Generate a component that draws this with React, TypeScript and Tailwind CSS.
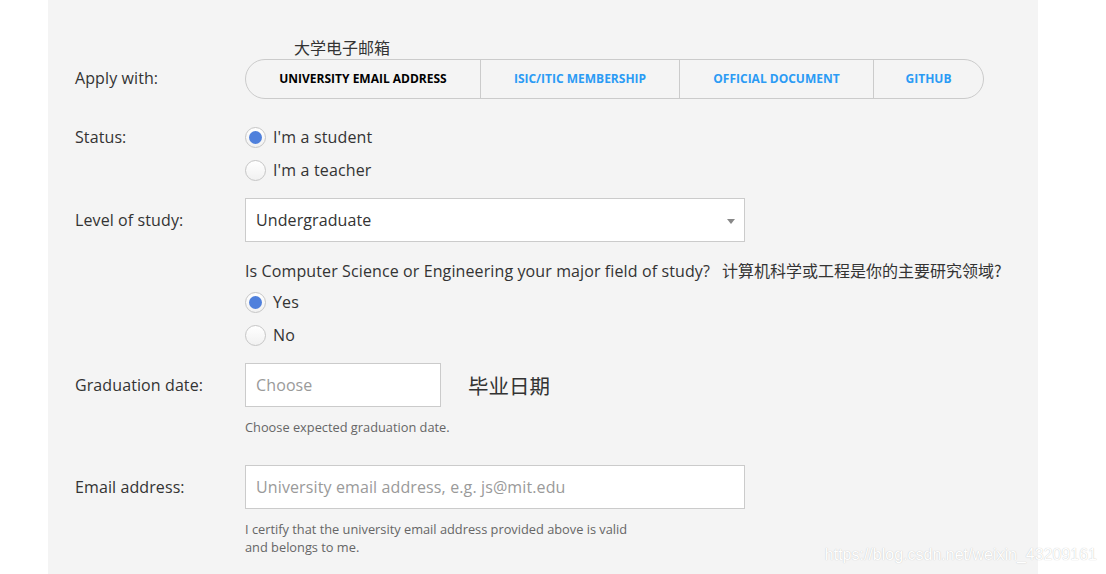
import React from "react";

const TABS = [
  { label: "University email address", w: "w-[234px]", active: true },
  { label: "ISIC/ITIC membership", w: "w-[199px]", active: false },
  { label: "Official document", w: "w-[194px]", active: false },
  { label: "GitHub", w: "flex-1", active: false },
];

function Radio({ checked, label }: { checked?: boolean; label: string }) {
  return (
    <label className="flex items-center h-[20px] gap-[7px] cursor-pointer">
      <span className="w-[21px] h-[21px] rounded-full border border-[#c6c6c6] bg-gradient-to-b from-white to-[#f1f1f1] flex items-center justify-center shrink-0">
        {checked && <span className="w-[13px] h-[13px] rounded-full bg-[#4f80dc]" />}
      </span>
      <span className="text-[16px] tracking-[0.15px] text-[#333]">{label}</span>
    </label>
  );
}

function Label({ children }: { children: React.ReactNode }) {
  return <div className="w-[170px] shrink-0 text-[16px] tracking-[0.1px] text-[#333]">{children}</div>;
}

export default function App() {
  return (
    <div className="relative min-h-[574px] bg-white font-['Open_Sans','Noto_Sans_CJK_SC',sans-serif]">
      <div className="ml-[48px] w-[990px] min-h-[574px] bg-[#f4f4f4] pl-[27px] pt-[36px]">
        {/* caption above tabs */}
        <div className="ml-[219px] h-[22px] leading-[22px] text-[16px] text-[#333] font-['Noto_Sans_CJK_SC',sans-serif]">
          大学电子邮箱
        </div>

        {/* Apply with */}
        <div className="flex items-center mt-[1px]">
          <Label>
            <div className="pb-[3px]">Apply with:</div>
          </Label>
          <div className="flex w-[739px] h-[40px] rounded-full border border-[#cbcbcb] overflow-hidden">
            {TABS.map((t, i) => (
              <button
                key={t.label}
                className={`${t.w} h-full flex items-center justify-center uppercase text-[12px] font-bold ${
                  i > 0 ? "border-l border-[#cbcbcb]" : ""
                } ${t.active ? "text-black" : "text-[#2b9bf4]"}`}
              >
                {t.label}
              </button>
            ))}
          </div>
        </div>

        {/* Status */}
        <div className="flex mt-[28px]">
          <Label>
            <div className="h-[20px] leading-[20px]">Status:</div>
          </Label>
          <div className="flex flex-col gap-[13px]">
            <Radio checked label="I'm a student" />
            <Radio label="I'm a teacher" />
          </div>
        </div>

        {/* Level of study */}
        <div className="flex items-center mt-[18px]">
          <Label>Level of study:</Label>
          <div className="w-[500px] h-[44px] bg-white border border-[#cbcbcb] flex items-center justify-between pl-[10px] pr-[9px]">
            <span className="text-[16px] tracking-[0.1px] text-[#333]">Undergraduate</span>
            <svg width="8" height="5" viewBox="0 0 8 5" className="mt-[2px]">
              <path d="M0 0h8L4 5z" fill="#888" />
            </svg>
          </div>
        </div>

        {/* Major question */}
        <div className="ml-[170px] mt-[17px] h-[22px] leading-[22px] text-[16px] text-[#333] whitespace-nowrap">
          <span className="tracking-[0.11px]">Is Computer Science or Engineering your major field of study?</span>
          <span className="ml-[12px] text-[16px] font-['Noto_Sans_CJK_SC',sans-serif]">计算机科学或工程是你的主要研究领域?</span>
        </div>
        <div className="ml-[170px] mt-[11px] flex flex-col gap-[13px]">
          <Radio checked label="Yes" />
          <Radio label="No" />
        </div>

        {/* Graduation date */}
        <div className="flex items-center mt-[18px]">
          <Label>Graduation date:</Label>
          <input
            placeholder="Choose"
            className="w-[196px] h-[44px] bg-white border border-[#cbcbcb] px-[10px] text-[16px] tracking-[0.12px] text-[#333] placeholder:text-[#9a9a9a] outline-none"
          />
          <span className="ml-[27px] text-[20.5px] text-[#333] font-['Noto_Sans_CJK_SC',sans-serif]">毕业日期</span>
        </div>
        <div className="ml-[170px] mt-[11px] text-[12.8px] leading-[18px] text-[#666]">
          Choose expected graduation date.
        </div>

        {/* Email */}
        <div className="flex items-center mt-[29px]">
          <Label>Email address:</Label>
          <input
            placeholder="University email address, e.g. js@mit.edu"
            className="w-[500px] h-[44px] bg-white border border-[#cbcbcb] px-[10px] text-[16px] tracking-[0.12px] text-[#333] placeholder:text-[#9a9a9a] outline-none"
          />
        </div>
        <div className="ml-[170px] mt-[11px] w-[390px] text-[12.8px] leading-[18px] text-[#666]">
          I certify that the university email address provided above is valid and belongs to me.
        </div>
      </div>

      {/* watermark */}
      <div className="absolute right-[9px] top-[545px] text-[16px] leading-[20px] font-['Liberation_Sans',sans-serif] text-white [text-shadow:0_0_1px_#b8b8b8] whitespace-nowrap">
        https://blog.csdn.net/weixin_43209161
      </div>
    </div>
  );
}
